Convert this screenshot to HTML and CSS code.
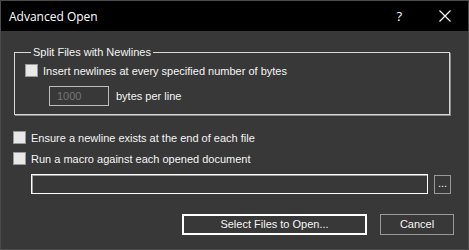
FILE: index.html
```html
<!DOCTYPE html>
<html>
<head>
<meta charset="utf-8">
<link rel="stylesheet" href="styles.css">
</head>
<body>
<div class="window">
  <div class="titlebar">
    <span class="title">Advanced Open</span>
    <span class="help">?</span>
    <svg class="close" width="12" height="12" viewBox="0 0 12 12"><path d="M0.5 0.5L11.5 11.5M11.5 0.5L0.5 11.5" stroke="#ffffff" stroke-width="1.2" fill="none"/></svg>
  </div>
  <div class="content">
    <fieldset class="group">
      <legend class="legend">Split Files with Newlines</legend>
      <label class="check-row">
        <span class="box"></span>
        <span class="label">Insert newlines at every specified number of bytes</span>
      </label>
      <div class="bytes-row">
        <div class="num-input">1000</div>
        <span class="label">bytes per line</span>
      </div>
    </fieldset>
    <label class="check-row outer first">
      <span class="box"></span>
      <span class="label">Ensure a newline exists at the end of each file</span>
    </label>
    <label class="check-row outer">
      <span class="box"></span>
      <span class="label">Run a macro against each opened document</span>
    </label>
    <div class="macro-row">
      <div class="text-input"></div>
      <div class="browse">...</div>
    </div>
    <div class="buttons">
      <div class="btn primary">Select Files to Open...</div>
      <div class="btn cancel">Cancel</div>
    </div>
  </div>
</div>
</body>
</html>
```
FILE: styles.css
```css
html, body {
  margin: 0;
  padding: 0;
  background: #383838;
}
.window {
  width: 469px;
  height: 250px;
  box-sizing: border-box;
  border: 1px solid #4b4b4b;
  background: #383838;
  color: #f5f5f5;
  font-family: "Liberation Sans", Arial, sans-serif;
  font-size: 11px;
  overflow: hidden;
}
.titlebar {
  height: 30px;
  background: #000000;
  display: flex;
  align-items: center;
  padding-left: 8px;
}
.title {
  font-family: "Open Sans", sans-serif;
  font-size: 12px;
  color: #ffffff;
  flex: 1;
}
.help {
  font-family: "Open Sans", sans-serif;
  font-size: 13px;
  color: #ffffff;
  margin-right: 37px;
}
.close {
  margin-right: 17px;
}
.content {
  padding: 14px 0 0 0;
}
.group {
  margin: 0 18px 0 13px;
  padding: 5px 0 8px 10px;
  border: 1px solid #d8d8d8;
  box-shadow: 1px 1px 0 #8a8a8a;
}
.legend {
  padding: 0 2px;
  margin-left: 6px;
  line-height: 14px;
  color: #f5f5f5;
}
.check-row {
  display: flex;
  align-items: center;
  height: 13px;
}
.box {
  width: 11px;
  height: 11px;
  border: 1px solid #9a9a9a;
  background: #e8e8e8;
  margin-right: 5px;
  flex: none;
}
.bytes-row {
  display: flex;
  align-items: center;
  margin-top: 9px;
  padding-left: 24px;
}
.num-input {
  width: 51px;
  height: 18px;
  border: 1px solid #bdbdbd;
  color: #777777;
  padding-left: 7px;
  line-height: 18px;
  margin-right: 7px;
}
.check-row.outer {
  margin-left: 12px;
}
.check-row.outer.first {
  margin-top: 16px;
}
.check-row.outer + .check-row.outer {
  margin-top: 8px;
}
.macro-row {
  display: flex;
  margin-top: 9px;
  margin-left: 30px;
}
.text-input {
  width: 395px;
  height: 18px;
  border: 1px solid #ffffff;
  box-shadow: inset 1px 1px 0 #9a9a9a;
}
.browse {
  width: 15px;
  height: 17px;
  margin-top: 1px;
  border: 1px solid #9a9a9a;
  margin-left: 6px;
  text-align: center;
  line-height: 14px;
  font-size: 11px;
}
.buttons {
  display: flex;
  margin-top: 20px;
  margin-left: 181px;
}
.btn {
  text-align: center;
  box-sizing: content-box;
}
.btn.primary {
  width: 181px;
  border: 2px solid #ffffff;
  height: 17px;
  line-height: 17px;
}
.btn.cancel {
  width: 72px;
  border: 1px solid #9a9a9a;
  margin-left: 13px;
  height: 19px;
  line-height: 19px;
}
```
